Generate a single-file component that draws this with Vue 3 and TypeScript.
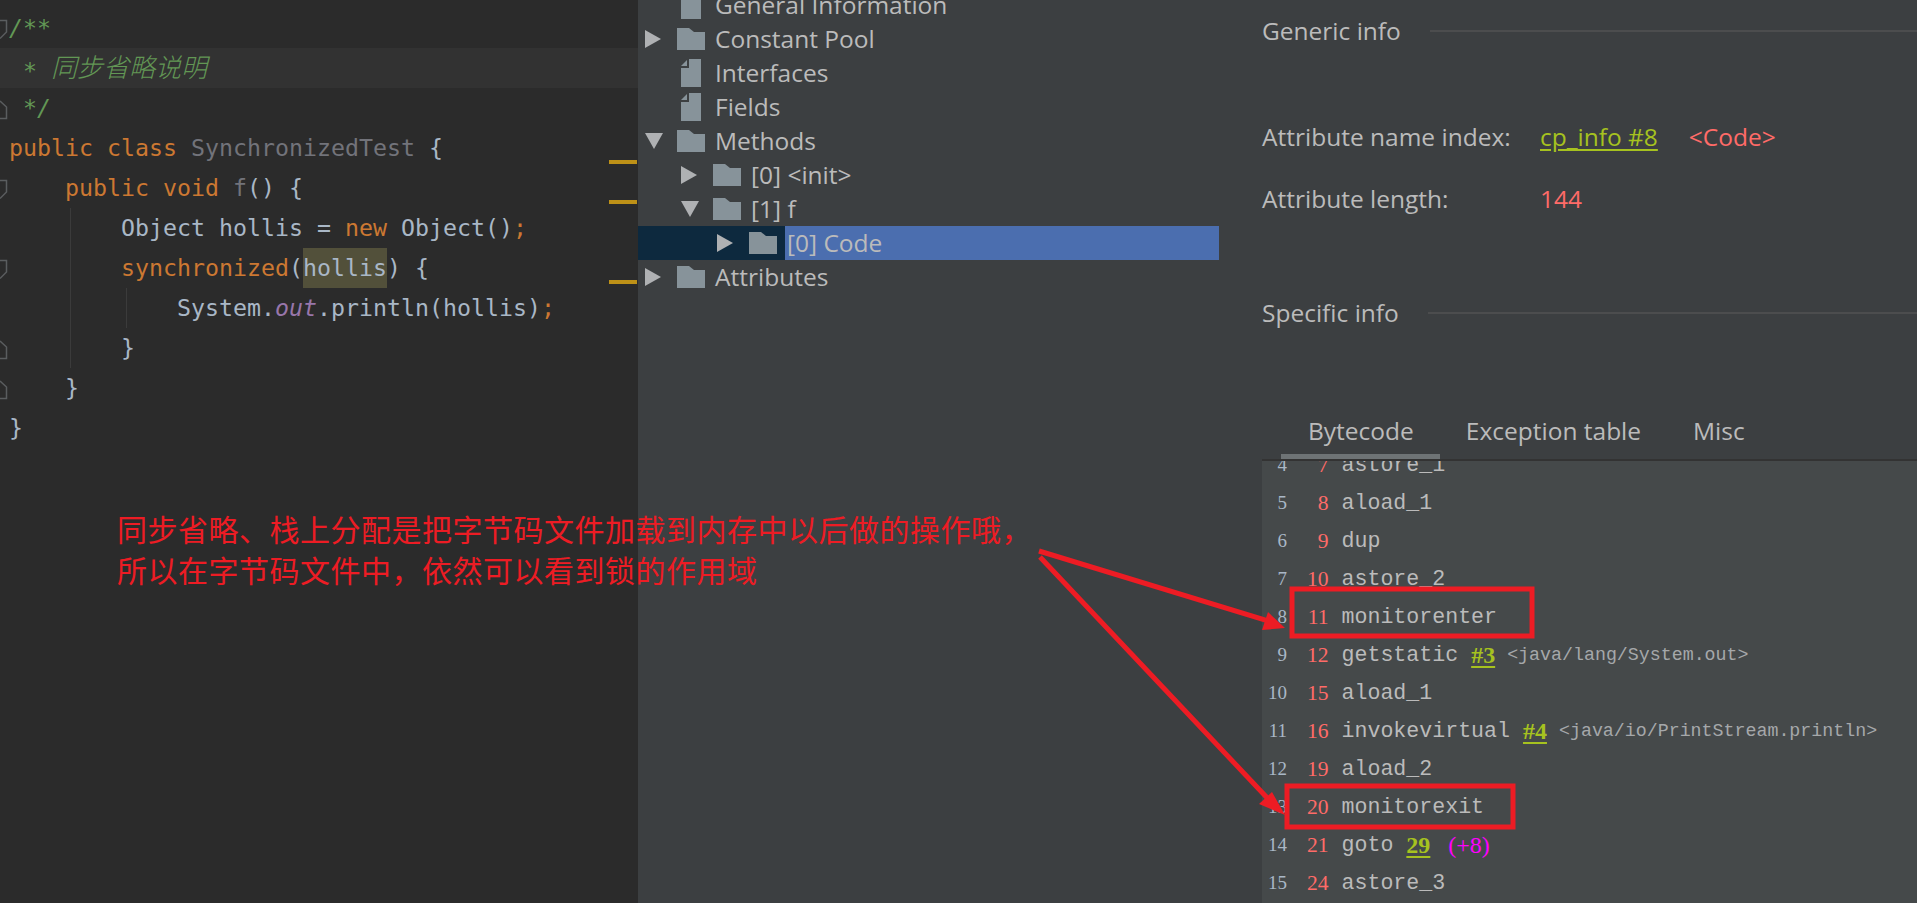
<script setup lang="ts">
interface TreeRow { label: string; level: number; arrow?: 'right' | 'down'; icon: 'folder' | 'file' | 'blank'; selected?: boolean }
const tree: TreeRow[] = [
  { label: 'General Information', level: 0, icon: 'blank' },
  { label: 'Constant Pool', level: 0, arrow: 'right', icon: 'folder' },
  { label: 'Interfaces', level: 0, icon: 'file' },
  { label: 'Fields', level: 0, icon: 'file' },
  { label: 'Methods', level: 0, arrow: 'down', icon: 'folder' },
  { label: '[0] <init>', level: 1, arrow: 'right', icon: 'folder' },
  { label: '[1] f', level: 1, arrow: 'down', icon: 'folder' },
  { label: '[0] Code', level: 2, arrow: 'right', icon: 'folder', selected: true },
  { label: 'Attributes', level: 0, arrow: 'right', icon: 'folder' },
]
interface BcRow { n: number; off: number; op: string; link?: string; note?: string; jump?: string }
const rows: BcRow[] = [
  { n: 4, off: 7, op: 'astore_1' },
  { n: 5, off: 8, op: 'aload_1' },
  { n: 6, off: 9, op: 'dup' },
  { n: 7, off: 10, op: 'astore_2' },
  { n: 8, off: 11, op: 'monitorenter' },
  { n: 9, off: 12, op: 'getstatic', link: '#3', note: '<java/lang/System.out>' },
  { n: 10, off: 15, op: 'aload_1' },
  { n: 11, off: 16, op: 'invokevirtual', link: '#4', note: '<java/io/PrintStream.println>' },
  { n: 12, off: 19, op: 'aload_2' },
  { n: 13, off: 20, op: 'monitorexit' },
  { n: 14, off: 21, op: 'goto', link: '29', jump: '(+8)' },
  { n: 15, off: 24, op: 'astore_3' },
]
const foldY: { y: number; up: boolean }[] = [
  { y: 20, up: false }, { y: 100, up: true }, { y: 180, up: false },
  { y: 260, up: false }, { y: 340, up: true }, { y: 380, up: true },
]
</script>

<template>
  <div class="page">
    <section class="editor">
      <div class="line"><span class="cm">/**</span></div>
      <div class="line current"><span class="cm star">* <i class="cjk">同步省略说明</i></span></div>
      <div class="line"><span class="cm star">*/</span></div>
      <div class="line"><span class="kw">public class </span><span class="un">SynchronizedTest</span> {</div>
      <div class="line in1"><span class="kw">public void </span><span class="un">f</span>() {</div>
      <div class="line in2">Object hollis = <span class="kw">new</span> Object()<span class="kw">;</span></div>
      <div class="line in2"><span class="kw">synchronized</span>(<span class="hl">hollis</span>) {</div>
      <div class="line in3">System.<i class="st">out</i>.println(hollis)<span class="kw">;</span></div>
      <div class="line in2">}</div>
      <div class="line in1">}</div>
      <div class="line">}</div>
      <i class="guide g1"></i>
      <i class="guide g2"></i>
      <i class="mark m1"></i>
      <i class="mark m2"></i>
      <i class="mark m3"></i>
      <svg class="fold" width="9" height="400" viewBox="0 0 9 400">
        <template v-for="f in foldY" :key="f.y">
          <path v-if="!f.up" :d="`M0 ${f.y + 0.5}H6.5V${f.y + 12}L0 ${f.y + 18.5}`" />
          <path v-else :d="`M0 ${f.y + 1}L6.5 ${f.y + 7}V${f.y + 18.5}H0`" />
        </template>
      </svg>
    </section>

    <section class="tree">
      <div v-for="r in tree" :key="r.label" class="row" :class="[`lv${r.level}`, { selected: r.selected }]">
        <span class="arrow">
          <svg v-if="r.arrow === 'right'" width="16" height="18" viewBox="0 0 16 18"><path d="M0 0L16 9L0 18Z" /></svg>
          <svg v-else-if="r.arrow === 'down'" width="18" height="16" viewBox="0 0 18 16"><path d="M0 0H18L9 16Z" /></svg>
        </span>
        <span class="icon">
          <svg v-if="r.icon === 'folder'" width="28" height="22" viewBox="0 0 28 22"><path d="M0 22V0H12L17 4H28V22Z" /></svg>
          <svg v-else width="28" height="28" viewBox="0 0 28 28"><path d="M4 28V9H12V0H24V28Z" /><path d="M4 7L10 1V7Z" /></svg>
        </span>
        <span class="label">{{ r.label }}</span>
      </div>
    </section>

    <section class="details">
      <div class="heading first"><span>Generic info</span><i></i></div>
      <div class="attr a1"><span class="key">Attribute name index:</span><a class="link">cp_info #8</a><span class="val code">&lt;Code&gt;</span></div>
      <div class="attr a2"><span class="key">Attribute length:</span><span class="val">144</span></div>
      <div class="heading second"><span>Specific info</span><i></i></div>
      <div class="tabs">
        <span class="tab active">Bytecode</span>
        <span class="tab">Exception table</span>
        <span class="tab">Misc</span>
      </div>
      <div class="bytecode">
        <div class="bc-inner">
          <div v-for="r in rows" :key="r.n" class="bc">
            <span class="n">{{ r.n }}</span>
            <span class="off">{{ r.off }}</span>
            <span class="op">{{ r.op }}</span>
            <a v-if="r.link" class="bc-link">{{ r.link }}</a>
            <span v-if="r.note" class="note">{{ r.note }}</span>
            <span v-if="r.jump" class="jump">{{ r.jump }}</span>
          </div>
        </div>
      </div>
    </section>

    <p class="annotation">同步省略、栈上分配是把字节码文件加载到内存中以后做的操作哦，<br />所以在字节码文件中，依然可以看到锁的作用域</p>
    <svg class="overlay" width="1917" height="903" viewBox="0 0 1917 903">
      <rect x="1292" y="589" width="240" height="47" />
      <rect x="1287" y="786" width="226" height="41" />
      <path d="M1039 551L1272 622" />
      <path d="M1040 557L1272 803" />
      <polygon points="1285,628 1268,612 1262,630" />
      <polygon points="1285,815 1259,804 1272,792" />
    </svg>
  </div>
</template>

<style>
html, body { margin: 0; background: #3c3f41; overflow: hidden; }
</style>

<style scoped>
.page { position: relative; display: flex; width: 1917px; height: 903px; overflow: hidden; background: #3c3f41; font-family: "Open Sans", "Liberation Sans", sans-serif; }

.editor { position: relative; box-sizing: border-box; flex: none; width: 638px; height: 903px; padding: 8px 0 0 9px; background: #2b2b2b; color: #a9b7c6; font-family: "DejaVu Sans Mono", "Noto Sans CJK SC", monospace; font-size: 23.25px; }
.line { height: 40px; line-height: 40px; white-space: pre; }
.in1 { padding-left: 56px; }
.in2 { padding-left: 112px; }
.in3 { padding-left: 168px; }
.current { margin-left: -9px; padding-left: 9px; background: #323232; }
.cm { color: #629755; font-style: italic; }
.star { margin-left: 14px; }
.cjk { position: relative; top: -2px; font-family: "Noto Sans CJK SC", sans-serif; font-size: 26px; font-weight: 300; letter-spacing: 0; }
.kw { color: #cc7832; }
.un { color: #72737a; }
.st { color: #9876aa; }
.hl { display: inline-block; height: 40px; background: #52503a; }
.guide { position: absolute; width: 1px; background: #3b3b3b; }
.g1 { left: 70px; top: 208px; height: 160px; }
.g2 { left: 126px; top: 288px; height: 40px; }
.mark { position: absolute; left: 609px; width: 28px; height: 4px; background: #be9117; }
.m1 { top: 160px; }
.m2 { top: 200px; }
.m3 { top: 280px; }
.fold { position: absolute; left: 0; top: 0; fill: none; stroke: #5a5d5f; stroke-width: 1.5; }

.tree { flex: none; width: 581px; margin-top: -12px; color: #bbbbbb; font-size: 24.5px; }
.row { display: flex; align-items: center; height: 34px; box-sizing: border-box; white-space: pre; }
.lv0 { padding-left: 7px; }
.lv1 { padding-left: 43px; }
.lv2 { padding-left: 79px; }
.arrow { display: flex; flex: none; align-items: center; width: 32px; height: 34px; fill: #afb1b3; }
.icon { display: flex; flex: none; align-items: center; width: 28px; height: 34px; fill: #87939a; }
.label { margin-left: 10px; margin-bottom: 2px; }
.selected { background: linear-gradient(90deg, #0d293e 147px, #4b6eaf 147px); }

.details { flex: none; box-sizing: border-box; width: 698px; padding-left: 43px; color: #bbbbbb; font-size: 24.5px; }
.heading { display: flex; align-items: center; height: 32px; }
.heading span { margin-bottom: 2px; }
.heading i { flex: 1; height: 2px; margin-left: 29px; background: #4c4d4e; }
.first { margin-top: 15px; }
.second { margin-top: 78px; }
.attr { display: flex; align-items: center; box-sizing: border-box; height: 40px; padding-bottom: 2px; }
.a1 { margin-top: 70px; }
.a2 { margin-top: 22px; }
.key { flex: none; width: 278px; }
.link { color: #a6c21f; text-decoration: underline; text-underline-offset: 3px; }
.val { color: #ff6b68; }
.code { margin-left: 31px; }

.tabs { display: flex; height: 48px; margin-top: 82px; margin-left: 19px; align-items: flex-start; }
.tab { position: relative; height: 48px; padding: 0 26px; line-height: 40px; }
.active { padding-left: 27px; box-shadow: inset 0 -5px 0 #6e7375; }
.bytecode { height: 444px; overflow: hidden; background: #45494a; border-top: 2px solid #333; box-sizing: border-box; }
.bc-inner { margin-top: -15px; }
.bc { display: flex; align-items: center; height: 38px; white-space: pre; }
.n { flex: none; width: 25px; text-align: right; color: #a9b7c6; font-family: "Liberation Serif", serif; font-size: 19px; }
.off { flex: none; width: 41.5px; text-align: right; color: #ff6b68; font-family: "Liberation Serif", serif; font-size: 21.6px; }
.op { flex: none; margin-left: 13px; color: #bbbbbb; font-family: "Liberation Mono", monospace; font-size: 21.6px; }
.bc-link { margin-left: 13px; color: #a6c21f; text-decoration: underline; text-underline-offset: 3px; font-family: "Liberation Serif", serif; font-size: 24px; font-weight: 700; }
.note { margin-left: 12px; color: #a5a8aa; font-family: "Liberation Mono", monospace; font-size: 18.3px; }
.jump { margin-left: 18px; color: #ff00ff; font-family: "Liberation Serif", serif; font-size: 24px; }

.annotation { position: absolute; left: 117px; top: 508px; margin: 0; color: #ed1c24; font-family: "Noto Sans CJK SC", sans-serif; font-size: 30px; line-height: 40.5px; font-weight: 400; letter-spacing: 0.5px; white-space: nowrap; }
.overlay { position: absolute; left: 0; top: 0; pointer-events: none; fill: none; stroke: #ed1c24; stroke-width: 5; }
.overlay polygon { fill: #ed1c24; stroke: none; }
</style>
